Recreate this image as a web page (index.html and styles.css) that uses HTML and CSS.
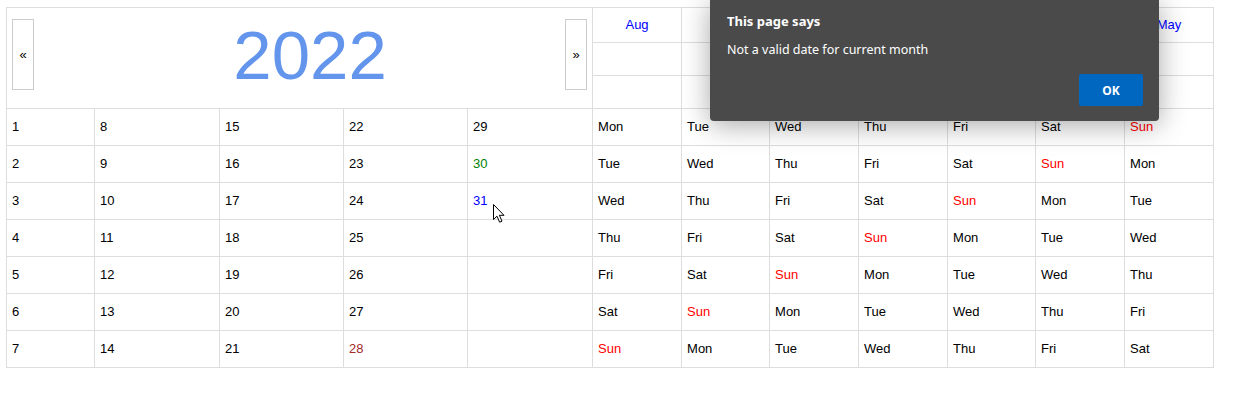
FILE: index.html
```html
<!DOCTYPE html>
<html>
<head>
<meta charset="utf-8">
<link rel="stylesheet" href="styles.css">
</head>
<body>
<table class="cal">
  <colgroup>
    <col class="c88"><col class="c125"><col class="c124"><col class="c124"><col class="c125">
    <col class="c89"><col class="c88"><col class="c89"><col class="c89"><col class="c88"><col class="c89"><col class="c89">
  </colgroup>
  <tr class="hr1">
    <td class="yearcell" colspan="5" rowspan="3">
      <div class="yearbar">
        <button class="nav">&laquo;</button>
        <div class="year">2022</div>
        <button class="nav">&raquo;</button>
      </div>
    </td>
    <td class="mon">Aug</td><td class="mon"></td><td class="mon"></td><td class="mon"></td><td class="mon"></td><td class="mon"></td><td class="mon">May</td>
  </tr>
  <tr class="hr2">
    <td class="mon"></td><td class="mon"></td><td class="mon"></td><td class="mon"></td><td class="mon"></td><td class="mon"></td><td class="mon"></td>
  </tr>
  <tr class="hr3">
    <td class="mon"></td><td class="mon"></td><td class="mon"></td><td class="mon"></td><td class="mon"></td><td class="mon"></td><td class="mon"></td>
  </tr>
  <tr class="row">
    <td>1</td><td>8</td><td>15</td><td>22</td><td>29</td>
    <td>Mon</td><td>Tue</td><td>Wed</td><td>Thu</td><td>Fri</td><td>Sat</td><td class="sun">Sun</td>
  </tr>
  <tr class="row">
    <td>2</td><td>9</td><td>16</td><td>23</td><td class="green">30</td>
    <td>Tue</td><td>Wed</td><td>Thu</td><td>Fri</td><td>Sat</td><td class="sun">Sun</td><td>Mon</td>
  </tr>
  <tr class="row">
    <td>3</td><td>10</td><td>17</td><td>24</td><td class="blue">31</td>
    <td>Wed</td><td>Thu</td><td>Fri</td><td>Sat</td><td class="sun">Sun</td><td>Mon</td><td>Tue</td>
  </tr>
  <tr class="row">
    <td>4</td><td>11</td><td>18</td><td>25</td><td></td>
    <td>Thu</td><td>Fri</td><td>Sat</td><td class="sun">Sun</td><td>Mon</td><td>Tue</td><td>Wed</td>
  </tr>
  <tr class="row">
    <td>5</td><td>12</td><td>19</td><td>26</td><td></td>
    <td>Fri</td><td>Sat</td><td class="sun">Sun</td><td>Mon</td><td>Tue</td><td>Wed</td><td>Thu</td>
  </tr>
  <tr class="row">
    <td>6</td><td>13</td><td>20</td><td>27</td><td></td>
    <td>Sat</td><td class="sun">Sun</td><td>Mon</td><td>Tue</td><td>Wed</td><td>Thu</td><td>Fri</td>
  </tr>
  <tr class="row">
    <td>7</td><td>14</td><td>21</td><td class="brown">28</td><td></td>
    <td class="sun">Sun</td><td>Mon</td><td>Tue</td><td>Wed</td><td>Thu</td><td>Fri</td><td>Sat</td>
  </tr>
</table>

<div class="dialog">
  <div class="dtitle">This page says</div>
  <div class="dmsg">Not a valid date for current month</div>
  <div class="dactions"><button class="ok">OK</button></div>
</div>

<svg class="cursor" width="13" height="21" viewBox="0 0 13 21">
  <path d="M1.5 1.5 L1.5 16.5 L5 13.2 L7.6 19.2 L10 18.2 L7.4 12.3 L12 12.3 Z" fill="#fff" stroke="#000" stroke-width="1" stroke-linejoin="miter"/>
</svg>
</body>
</html>
```

FILE: styles.css
```css
html, body {
  margin: 0;
  padding: 0;
  background: #fff;
}
body {
  font-family: "Liberation Sans", Arial, sans-serif;
  font-size: 13px;
  color: #000;
  position: relative;
  width: 1248px;
  height: 418px;
  overflow: hidden;
}
.cal {
  border-collapse: collapse;
  table-layout: fixed;
  width: 1208px;
  margin: 7px 0 0 6px;
}
.cal td {
  border: 1px solid #dddddd;
  padding: 0 5px 2px 5px;
  vertical-align: middle;
  white-space: nowrap;
  overflow: hidden;
}
.c88 { width: 88px; }
.c89 { width: 89px; }
.c124 { width: 124px; }
.c125 { width: 125px; }

.hr1 td.mon { height: 32px; }
.hr2 td.mon, .hr3 td.mon { height: 30px; }
.mon {
  text-align: center;
  color: #0000ff;
}
.row td { height: 34px; }

.cal td.yearcell {
  vertical-align: top;
  padding: 11px 5px 0 5px;
}
.yearbar {
  display: flex;
  align-items: stretch;
  height: 71px;
}
.nav {
  width: 22px;
  height: 71px;
  padding: 0;
  margin: 0;
  background: #fff;
  border: 1px solid #cccccc;
  font-family: "Liberation Sans", Arial, sans-serif;
  font-size: 13px;
  color: #000;
}
.year {
  flex: 1;
  text-align: center;
  padding-left: 21px;
  font-size: 69px;
  line-height: 73px;
  color: #6495ed;
}

.sun { color: #ff0000; }
.green { color: #008000; }
.blue { color: #0000ff; }
.brown { color: #a52a2a; }

.dialog {
  position: absolute;
  left: 710px;
  top: 0;
  width: 449px;
  height: 121px;
  box-sizing: border-box;
  background: #4a4a4a;
  border-radius: 0 0 4px 4px;
  box-shadow: 0 4px 28px rgba(0, 0, 0, 0.35);
  padding: 12px 16px 0 17px;
  color: #fff;
  font-family: "Noto Sans", "Open Sans", sans-serif;
}
.dtitle {
  font-weight: bold;
  font-size: 13px;
  line-height: 18px;
}
.dmsg {
  margin-top: 11px;
  font-size: 12.5px;
  line-height: 18px;
}
.dactions {
  display: flex;
  justify-content: flex-end;
  margin-top: 15px;
}
.ok {
  width: 64px;
  height: 32px;
  background: #0067c0;
  color: #fff;
  border: none;
  border-radius: 2px;
  font-family: "Noto Sans", "Open Sans", sans-serif;
  font-weight: bold;
  font-size: 12px;
  padding: 0;
}
.cursor {
  position: absolute;
  left: 492px;
  top: 203px;
}
```
